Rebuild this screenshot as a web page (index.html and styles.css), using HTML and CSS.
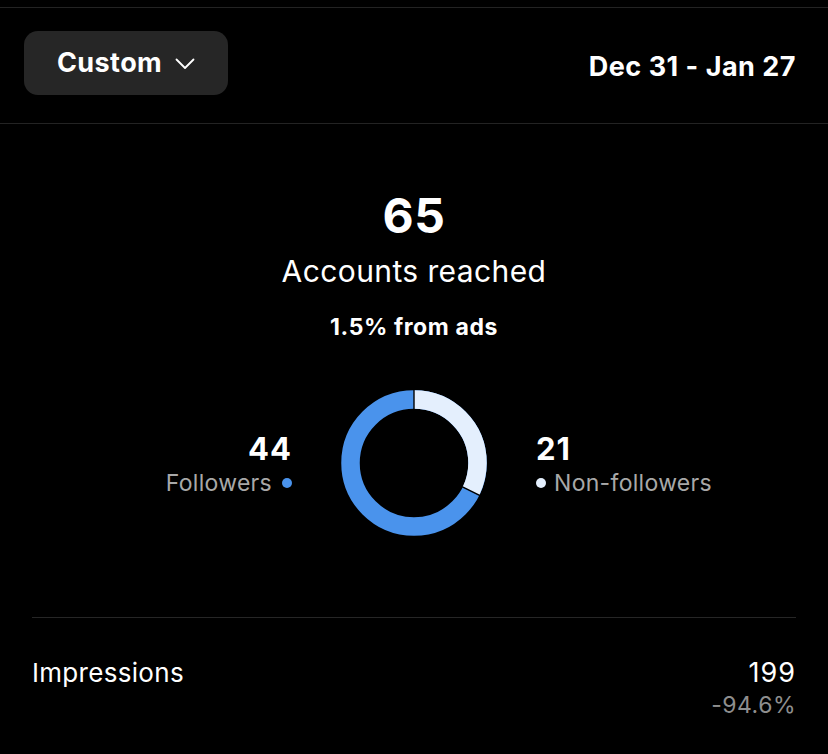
FILE: index.html
```html
<!DOCTYPE html>
<html>
<head>
<meta charset="utf-8">
<link rel="stylesheet" href="styles.css">
</head>
<body>
<div class="screen">
  <header class="header">
    <button class="range-btn">
      <span>Custom</span>
      <svg class="chev" width="20" height="12" viewBox="0 0 20 12"><polyline points="1.5,1.5 10,10 18.5,1.5" fill="none" stroke="#fff" stroke-width="1.8" stroke-linecap="round" stroke-linejoin="round"/></svg>
    </button>
    <div class="date">Dec 31 - Jan 27</div>
  </header>
  <section class="reach">
    <div class="big">65</div>
    <div class="label">Accounts reached</div>
    <div class="ads">1.5% from ads</div>
    <div class="chart-row">
      <div class="legend legend-left">
        <div class="num">44</div>
        <div class="name">Followers <span class="dot dot-blue"></span></div>
      </div>
      <svg class="donut" width="146" height="146" viewBox="0 0 146 146">
        <circle cx="73" cy="73" r="63.5" fill="none" stroke="#4a93ec" stroke-width="18.5"/>
        <circle cx="73" cy="73" r="63.5" fill="none" stroke="#e4effd" stroke-width="18.5" stroke-dasharray="128.4 400" transform="rotate(-90 73 73)"/>
        <line x1="73" y1="0" x2="73" y2="19" stroke="#000" stroke-width="1.4"/>
        <line x1="121.4" y1="96.9" x2="139.1" y2="105.6" stroke="#000" stroke-width="1.6"/>
      </svg>
      <div class="legend legend-right">
        <div class="num">21</div>
        <div class="name"><span class="dot dot-light"></span> Non-followers</div>
      </div>
    </div>
    <div class="divider"></div>
    <div class="metric">
      <div class="metric-name">Impressions</div>
      <div class="metric-vals">
        <div class="metric-val">199</div>
        <div class="metric-delta">-94.6%</div>
      </div>
    </div>
  </section>
</div>
</body>
</html>
```
FILE: styles.css
```css
html, body {
  margin: 0;
  padding: 0;
  background: #000;
}
body {
  font-family: Inter, "Noto Sans", sans-serif;
  color: #fff;
  -webkit-font-smoothing: antialiased;
}
.screen {
  width: 828px;
  height: 754px;
  overflow: hidden;
  padding-top: 7px;
  box-sizing: border-box;
}
.header {
  border-top: 1px solid #232323;
  border-bottom: 1px solid #232323;
  box-sizing: border-box;
  display: flex;
  align-items: center;
  justify-content: space-between;
  padding: 0 32px 0 24px;
  height: 117px;
}
.range-btn {
  height: 64px;
  margin-top: -6px;
  width: 204px;
  border: none;
  border-radius: 14px;
  background: #262626;
  color: #fff;
  font-family: inherit;
  font-size: 27px;
  font-weight: 700;
  display: flex;
  align-items: center;
  padding: 0 0 0 33px;
  gap: 13px;
  letter-spacing: 0.4px;
}
.chev {
  margin-top: 2px;
}
.date {
  font-size: 27px;
  font-weight: 700;
  letter-spacing: 0.5px;
  margin-top: 2px;
}
.reach {
  padding: 0 32px;
  display: flex;
  flex-direction: column;
  align-items: center;
}
.big {
  margin-top: 66px;
  font-size: 48px;
  font-weight: 700;
  line-height: 52px;
  letter-spacing: 0.5px;
}
.label {
  margin-top: 11px;
  font-size: 30px;
  line-height: 36px;
  font-weight: 400;
  letter-spacing: 0.4px;
}
.ads {
  margin-top: 24px;
  font-size: 23px;
  line-height: 28px;
  font-weight: 700;
  letter-spacing: 0.6px;
}
.chart-row {
  margin-top: 49px;
  width: 100%;
  display: grid;
  grid-template-columns: 1fr 146px 1fr;
  align-items: center;
  column-gap: 49px;
}
.donut {
  display: block;
}
.legend {
  display: flex;
  flex-direction: column;
  gap: 4px;
  margin-top: 4px;
}
.legend-left {
  align-items: flex-end;
}
.legend-right {
  align-items: flex-start;
}
.num {
  font-size: 31px;
  font-weight: 700;
  line-height: 32px;
  letter-spacing: 1px;
}
.name {
  font-size: 23px;
  line-height: 28px;
  color: #a8a8a8;
  display: flex;
  align-items: center;
  gap: 10px;
  letter-spacing: 0.3px;
}
.dot {
  width: 10px;
  height: 10px;
  border-radius: 50%;
  display: inline-block;
}
.dot-blue { background: #4a93ec; }
.dot-light { background: #e4effd; margin-right: -2px; }
.divider {
  margin-top: 81px;
  width: 100%;
  height: 1px;
  background: #262626;
}
.metric {
  width: 100%;
  margin-top: 39px;
  display: flex;
  justify-content: space-between;
  align-items: flex-start;
}
.metric-name {
  font-size: 26px;
  line-height: 32px;
  letter-spacing: 0.3px;
}
.metric-vals {
  text-align: right;
}
.metric-val {
  font-size: 27px;
  line-height: 32px;
  letter-spacing: 1px;
}
.metric-delta {
  margin-top: 2px;
  font-size: 23px;
  line-height: 28px;
  color: #8e8e8e;
  letter-spacing: 0.5px;
}
```
